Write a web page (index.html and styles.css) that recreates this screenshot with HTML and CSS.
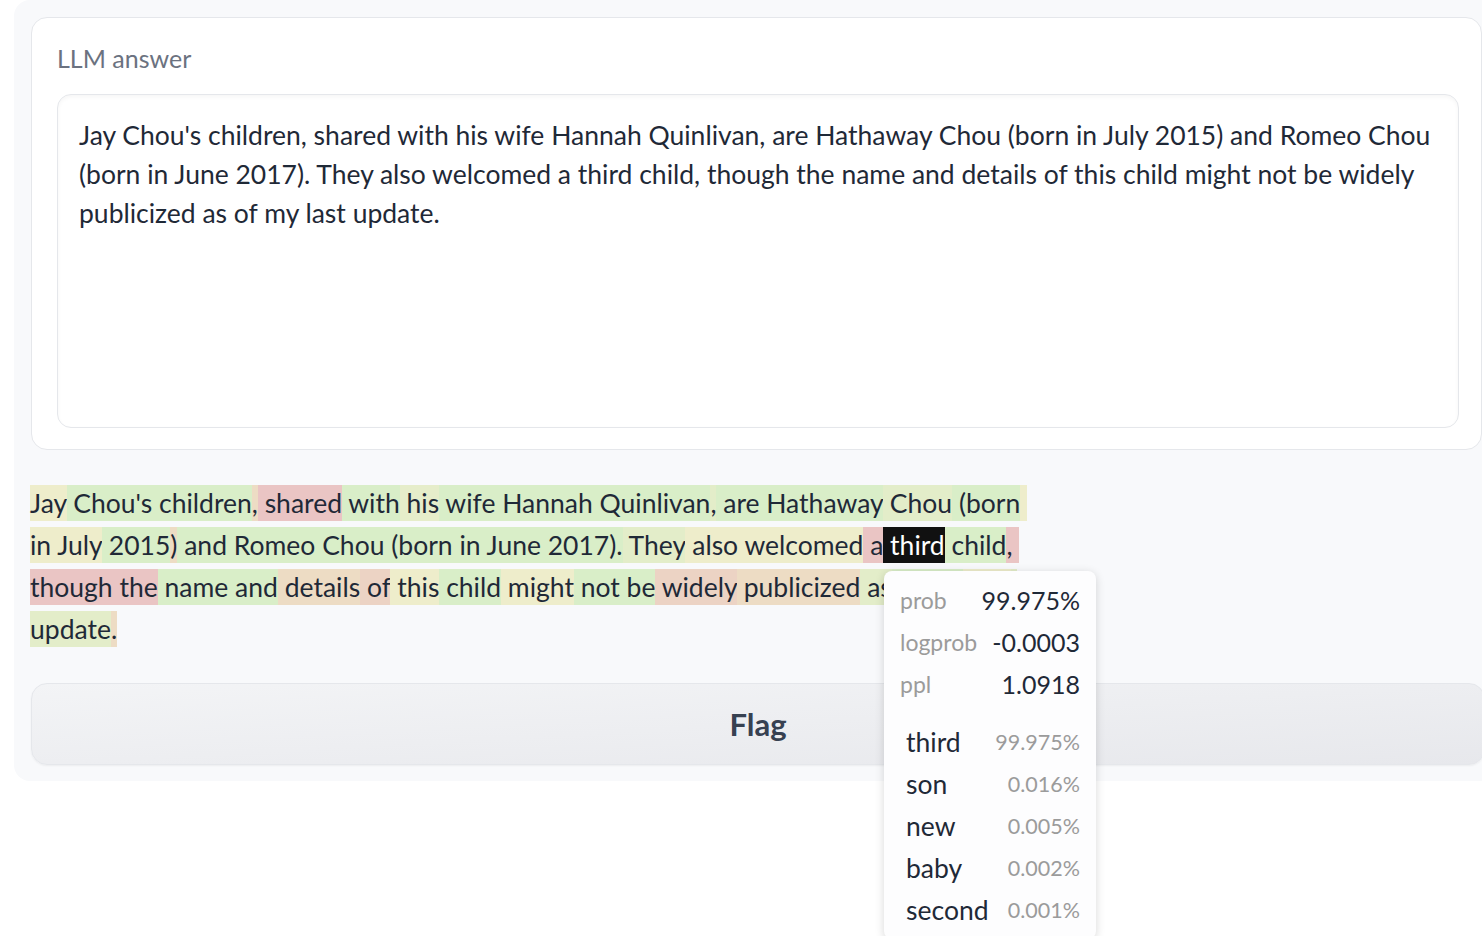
FILE: index.html
```html
<!DOCTYPE html>
<html lang="en">
<head>
<meta charset="utf-8">
<title>LLM answer</title>
<link rel="stylesheet" href="styles.css">
</head>
<body>
<div class="panel">
  <div class="card">
    <div class="label">LLM answer</div>
    <div class="textbox">Jay Chou's children, shared with his wife Hannah Quinlivan, are Hathaway Chou (born in July 2015) and Romeo Chou (born in June 2017). They also welcomed a third child, though the name and details of this child might not be widely publicized as of my last update.</div>
  </div>
  <div class="hl-wrap">
    <div class="hl"><span class="t y">Jay</span><span class="t g"> Chou</span><span class="t g">'s</span><span class="t g"> children</span><span class="t b">,</span><span class="t r"> shared</span><span class="t g"> with</span><span class="t yg2"> his</span><span class="t g"> wife</span><span class="t g"> Hannah</span><span class="t g"> Quinlivan</span><span class="t yg">,</span><span class="t g"> are</span><span class="t g"> Hathaway</span><span class="t yg"> Chou</span><span class="t g"> (</span><span class="t g">born</span><span class="t y"> </span><span class="t y">in</span><span class="t y"> July</span><span class="t g"> 2015</span><span class="t b">)</span><span class="t g"> and</span><span class="t g"> Romeo</span><span class="t g"> Chou</span><span class="t g"> (</span><span class="t g">born</span><span class="t g"> in</span><span class="t g"> June</span><span class="t g"> 2017</span><span class="t g">).</span><span class="t yg"> They</span><span class="t y"> also</span><span class="t y"> welcomed</span><span class="t r"> a</span><span class="t sel"> third</span><span class="t g"> child</span><span class="t r">,</span><span class="t r"> </span><span class="t r">though</span><span class="t r"> the</span><span class="t g"> name</span><span class="t g"> and</span><span class="t b"> details</span><span class="t br"> of</span><span class="t y"> this</span><span class="t g"> child</span><span class="t y"> might</span><span class="t g"> not</span><span class="t g"> be</span><span class="t br"> widely</span><span class="t b"> publicized</span><span class="t yg"> as</span><span class="t g"> of</span><span class="t g"> my</span><span class="t y"> last</span><span class="t yg"> </span><span class="t yg">update</span><span class="t b">.</span></div>
    <div class="tooltip">
      <div class="stats">
        <span class="k">prob</span><span class="v">99.975%</span>
        <span class="k">logprob</span><span class="v">-0.0003</span>
        <span class="k">ppl</span><span class="v">1.0918</span>
      </div>
      <div class="alts">
        <span class="tok">third</span><span class="p">99.975%</span>
        <span class="tok">son</span><span class="p">0.016%</span>
        <span class="tok">new</span><span class="p">0.005%</span>
        <span class="tok">baby</span><span class="p">0.002%</span>
        <span class="tok">second</span><span class="p">0.001%</span>
      </div>
    </div>
  </div>
  <button class="flag">Flag</button>
</div>
</body>
</html>
```
FILE: styles.css
```css
html, body {
  margin: 0;
  height: 936px;
  overflow: hidden;
  background: #ffffff;
}
body {
  font-family: Lato, "Source Sans Pro", "Noto Sans", sans-serif;
  color: #1f2937;
}
.panel {
  margin-left: 14px;
  width: 1500px;
  box-sizing: border-box;
  background: #f8f9fb;
  border-radius: 16px;
  padding: 17px 0 16px 17px;
}
.card {
  width: 1451px;
  box-sizing: border-box;
  background: #ffffff;
  border: 1px solid #e5e7eb;
  border-radius: 16px;
  padding: 25px 22px 21px 25px;
}
.label {
  font-size: 25px;
  line-height: 30px;
  color: #6b7280;
  margin-bottom: 21px;
}
.textbox {
  height: 334px;
  box-sizing: border-box;
  border: 1px solid #e5e7eb;
  border-radius: 14px;
  padding: 21px 21px;
  font-size: 26.5px;
  line-height: 39px;
  color: #1f2937;
  box-shadow: inset 0 2px 4px rgba(0, 0, 0, 0.04);
}
.hl-wrap {
  position: relative;
  margin: 32px 0 0 -1px;
}
.hl {
  width: 1012px;
  font-size: 26.5px;
  line-height: 42px;
  white-space: pre-wrap;
}
.t {
  padding: 2px 0;
}
.g { background: #d9eec8; }
.y { background: #eeedcb; }
.yg { background: #e3edc9; }
.yg2 { background: #e6edca; }
.b { background: #eddcc4; }
.br { background: #ecd3c4; }
.r { background: #eac5c4; }
.sel { background: #111111; color: #ffffff; }
.tooltip {
  position: absolute;
  left: 854px;
  top: 89px;
  width: 212px;
  box-sizing: border-box;
  padding: 8px 16px;
  background: #fdfdfe;
  border-radius: 8px;
  box-shadow: 0 2px 10px rgba(0, 0, 0, 0.16);
  z-index: 5;
}
.stats, .alts {
  display: grid;
  grid-template-columns: auto 1fr;
  grid-auto-rows: 42px;
  align-items: center;
}
.alts {
  margin-top: 16px;
}
.k {
  font-size: 23px;
  color: #9b9b9b;
}
.v {
  font-size: 25px;
  text-align: right;
  color: #1f2937;
}
.tok {
  font-size: 26.5px;
  padding-left: 6px;
  color: #1f2937;
}
.p {
  font-size: 21.5px;
  text-align: right;
  color: #9b9b9b;
}
.flag {
  display: block;
  width: 1454px;
  height: 82px;
  margin: 33px 0 0 0;
  border: 1px solid #e5e7eb;
  border-radius: 16px;
  background: linear-gradient(to bottom right, #f3f4f6, #e7e8ec);
  box-shadow: 0 1px 2px rgba(0, 0, 0, 0.05);
  font-family: Lato, "Source Sans Pro", sans-serif;
  font-weight: 700;
  font-size: 31px;
  color: #374151;
  padding: 0;
}
```
